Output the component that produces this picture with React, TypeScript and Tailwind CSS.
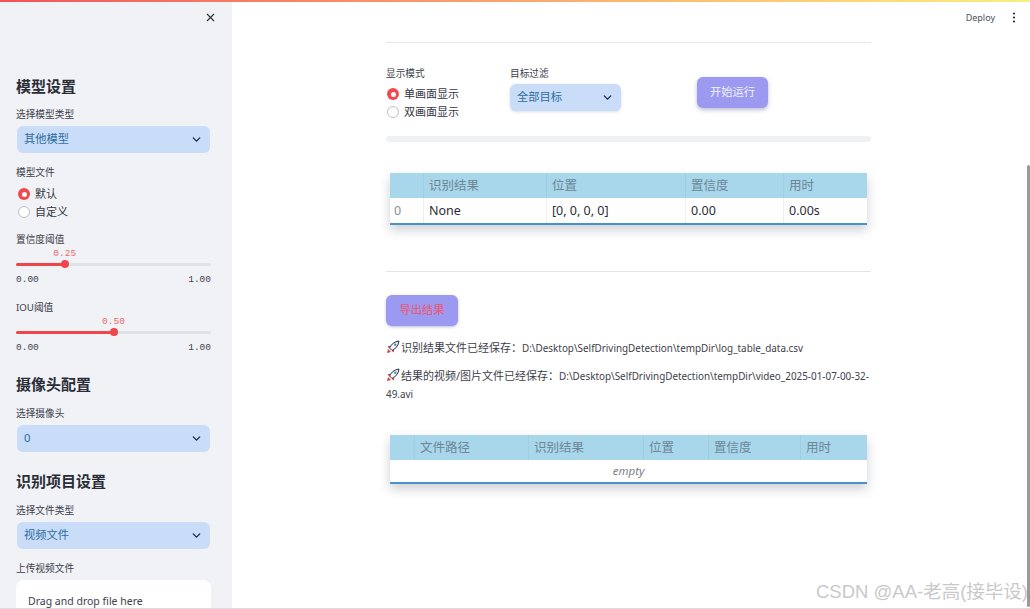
import React from "react";
import { ChevronDown, X } from "lucide-react";

const FONT = "font-['Noto_Sans','Noto_Sans_CJK_SC',sans-serif]";

const Label = ({ text, className = "" }: { text: string; className?: string }) => (
  <div className={`h-[14px] text-[9.7px] leading-[14px] text-[#3d404a] ${className}`}>{text}</div>
);

const Heading = ({ text, className = "" }: { text: string; className?: string }) => (
  <div className={`h-[20px] text-[15px] leading-[20px] font-bold text-[#2b2d36] ${className}`}>{text}</div>
);

const Dropdown = ({ value, className = "" }: { value: string; className?: string }) => (
  <div className={`flex h-[27px] items-center justify-between rounded-md bg-[#c9dcf8] pl-[7px] pr-[7px] text-[11.25px] text-[#2f6d9f] ${className}`}>
    <span>{value}</span>
    <ChevronDown size={13} strokeWidth={2.5} className="text-[#1f2a44]" />
  </div>
);

const Radio = ({ text, checked }: { text: string; checked?: boolean }) => (
  <div className="flex h-[18px] items-center gap-[5px] text-[11px] text-[#33363f]">
    {checked ? (
      <span className="flex h-[12px] w-[12px] items-center justify-center rounded-full bg-[#f04a50]">
        <span className="h-[5px] w-[5px] rounded-full bg-white" />
      </span>
    ) : (
      <span className="h-[12px] w-[12px] rounded-full border border-[#bfc1c7] bg-white" />
    )}
    <span>{text}</span>
  </div>
);

const Slider = ({ label, value, percent, className = "" }: { label: string; value: string; percent: number; className?: string }) => (
  <div className={className}>
    <Label text={label} />
    <div className="relative mt-[1px] h-[12px]">
      <span
        className="absolute top-0 -translate-x-1/2 font-['Liberation_Mono',monospace] text-[9.5px] leading-[12px] text-[#ee6a6e]"
        style={{ left: `${percent}%` }}
      >
        {value}
      </span>
    </div>
    <div className="relative flex h-[8px] items-center">
      <div className="h-[3px] w-full rounded-full bg-[#dfe1e6]" />
      <div className="absolute left-0 h-[3px] rounded-full bg-[#f0454b]" style={{ width: `${percent}%` }} />
      <div
        className="absolute h-[8px] w-[8px] -translate-x-1/2 rounded-full bg-[#f0454b]"
        style={{ left: `${percent}%` }}
      />
    </div>
    <div className="mt-[6px] flex justify-between font-['Liberation_Mono',monospace] text-[9.5px] leading-[12px] text-[#44474f]">
      <span>0.00</span>
      <span>1.00</span>
    </div>
  </div>
);

const Sidebar = () => (
  <aside className="h-full w-[232px] shrink-0 overflow-hidden bg-[#f0f2f6] pl-[16px] pr-[21px]">
    <div className="flex h-[27px] items-center justify-end pt-[8px]">
      <X size={13} strokeWidth={2} className="mr-[-6px] text-[#2b2d36]" />
    </div>
    <Heading text="模型设置" className="mt-[49px]" />
    <Label text="选择模型类型" className="mt-[12px]" />
    <Dropdown value="其他模型" className="mt-[4px] ml-[1px] mr-[1px]" />
    <Label text="模型文件" className="mt-[13px]" />
    <div className="mt-[5px] ml-[2px]">
      <Radio text="默认" checked />
      <Radio text="自定义" />
    </div>
    <Slider label="置信度阈值" value="0.25" percent={25} className="mt-[12px]" />
    <Slider label="IOU阈值" value="0.50" percent={50} className="mt-[15px]" />
    <Heading text="摄像头配置" className="mt-[20px]" />
    <Label text="选择摄像头" className="mt-[13px]" />
    <Dropdown value="0" className="mt-[4px] ml-[1px] mr-[1px]" />
    <Heading text="识别项目设置" className="mt-[19px]" />
    <Label text="选择文件类型" className="mt-[13px]" />
    <Dropdown value="视频文件" className="mt-[4px] ml-[1px] mr-[1px]" />
    <Label text="上传视频文件" className="mt-[13px]" />
    <div className="mt-[4px] h-[30px] rounded-t-lg bg-white pl-[12px] pt-[13px] text-[10.5px] leading-[16px] text-[#3d404a]">
      Drag and drop file here
    </div>
  </aside>
);

const DataTable = ({
  columns,
  headers,
  children,
  className = "",
}: {
  columns: string;
  headers: string[];
  children: React.ReactNode;
  className?: string;
}) => (
  <div className={`mx-[4px] w-[477px] border-b-2 border-[#4b93c7] shadow-[0_5px_10px_rgba(90,100,110,0.3)] ${className}`}>
    <div className={`grid h-[25px] bg-[#a8d6ea] text-[12.5px] leading-[25px] text-[#6b8798] ${columns}`}>
      {headers.map((h, i) => (
        <div key={i} className="border-r border-[#9fcde1] pl-[5px] last:border-r-0">
          {h}
        </div>
      ))}
    </div>
    {children}
  </div>
);

// 🚀 emoji, tilted as in the picture
const RocketIcon = () => (
  <svg width="14" height="14" viewBox="0 0 14 14" className="mr-px inline-block align-[-2px]">
    <path d="M2 9 L1 13 L5 12 Z" fill="#d8433f" />
    <path d="M3 8 L1.5 6.5 L4.5 5.5 Z M6 11 L7.5 12.5 L8.5 9.5 Z" fill="#c23a3f" />
    <path d="M3.5 8 C5 4.5 8.5 1.5 13 1 C12.5 5.5 9.5 9 6 10.5 Z" fill="#f2f3f5" stroke="#27303a" strokeWidth="1" />
    <circle cx="9.3" cy="4.7" r="1.2" fill="#4a90c2" />
  </svg>
);

const PathLine = ({ title, children }: { title: string; children: React.ReactNode }) => (
  <p className="text-[9.9px] leading-[18px] text-[#3d404a]">
    <RocketIcon />
    <span className="text-[11px]">{title}</span>
    {children}
  </p>
);

const Main = () => (
  <main className="relative min-w-0 flex-1 bg-white">
    <div className="flex h-[34px] items-center justify-end gap-[17px] pr-[14px] pt-[1px]">
      <span className="text-[9px] text-[#4c4f58]">Deploy</span>
      <svg width="4" height="11" viewBox="0 0 4 11" className="text-[#2b2d36]">
        <circle cx="2" cy="1.5" r="1.1" fill="currentColor" />
        <circle cx="2" cy="5.5" r="1.1" fill="currentColor" />
        <circle cx="2" cy="9.5" r="1.1" fill="currentColor" />
      </svg>
    </div>

    <div className="ml-[154px] w-[485px]">
      <div className="mt-[8px] h-px bg-[#e3e4e8]" />

      <div className="mt-[24px] flex h-[62px]">
        <div className="w-[124px]">
          <Label text="显示模式" />
          <div className="mt-[4px] ml-[1px]">
            <Radio text="单画面显示" checked />
            <Radio text="双画面显示" />
          </div>
        </div>
        <div className="w-[187px]">
          <Label text="目标过滤" />
          <Dropdown value="全部目标" className="mt-[3px] w-[111px] shadow-[0_1px_3px_rgba(120,140,180,0.3)]" />
        </div>
        <div className="pt-[10px]">
          <button className="h-[31px] w-[71px] rounded-md bg-[#9b99f0] text-[11.25px] text-[#f2f2fb] shadow-[0_2px_4px_rgba(90,90,160,0.4)]">
            开始运行
          </button>
        </div>
      </div>

      <div className="mt-[7px] h-[6px] rounded-sm bg-[#f0f1f3]" />

      <DataTable
        className="mt-[31px]"
        columns="grid-cols-[34px_123px_139px_98px_83px]"
        headers={["", "识别结果", "位置", "置信度", "用时"]}
      >
        <div className="grid h-[25px] grid-cols-[34px_123px_139px_98px_83px] bg-white text-[12.5px] leading-[25px] text-[#2b2d36]">
          <div className="border-r border-[#eeeeee] pl-[4px] text-[#8a8d94]">0</div>
          <div className="border-r border-[#eeeeee] pl-[5px]">None</div>
          <div className="border-r border-[#eeeeee] pl-[5px]">[0, 0, 0, 0]</div>
          <div className="border-r border-[#eeeeee] pl-[5px]">0.00</div>
          <div className="pl-[5px]">0.00s</div>
        </div>
      </DataTable>

      <div className="mt-[46px] h-px bg-[#e3e4e8]" />

      <button className="mt-[23px] block h-[31px] w-[72px] rounded-md bg-[#9b99f0] text-[11.25px] text-[#f0566e] shadow-[0_1px_3px_rgba(90,90,160,0.4)]">
        导出结果
      </button>

      <div className="mt-[13px]">
        <PathLine title="识别结果文件已经保存：">D:\Desktop\SelfDrivingDetection\tempDir\log_table_data.csv</PathLine>
      </div>
      <div className="mt-[10px] w-[484px]">
        <PathLine title="结果的视频/图片文件已经保存：">
          D:\Desktop\SelfDrivingDetection\tempDir\video_2025-01-07-00-32-49.avi
        </PathLine>
      </div>

      <DataTable
        className="mt-[32px]"
        columns="grid-cols-[25px_114px_115px_65px_92px_66px]"
        headers={["", "文件路径", "识别结果", "位置", "置信度", "用时"]}
      >
        <div className="h-[22px] bg-white text-center text-[11.5px] italic leading-[22px] text-[#7c7f86]">empty</div>
      </DataTable>
    </div>

    {/* scrollbar */}
    <div className="absolute right-0 top-[165px] bottom-[2px] w-[3px] rounded-full bg-[#9a9a9a]" />
    <div className="absolute right-[2px] bottom-[5px] font-['Liberation_Sans','Noto_Sans_CJK_SC',sans-serif] text-[18.5px] leading-[24px] text-[#c9c9c9]">
      CSDN @AA-老高(接毕设)
    </div>
  </main>
);

export default function App() {
  return (
    <div className={`relative flex h-[609px] w-[1030px] overflow-hidden ${FONT}`}>
      <div className="absolute left-0 right-0 top-0 z-10 h-[2px] bg-gradient-to-r from-[#f0525a] to-[#f8ef80]" />
      <Sidebar />
      <Main />
      <div className="absolute bottom-0 left-0 right-0 h-px bg-[#dcdcdc]" />
    </div>
  );
}
